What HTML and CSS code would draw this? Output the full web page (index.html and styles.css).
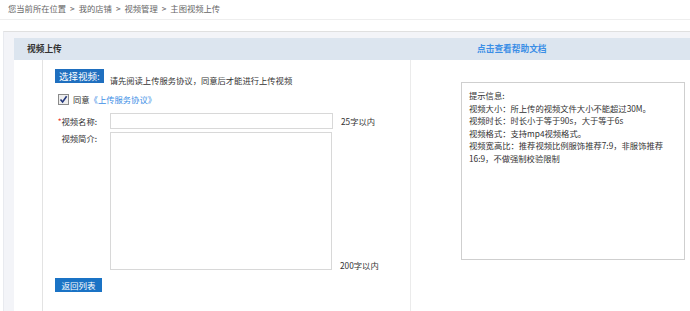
FILE: index.html
```html
<!DOCTYPE html>
<html>
  <head>
    <meta charset="utf-8">
    <title>主图视频上传</title>
    <link rel="stylesheet" href="styles.css">
  </head>
  <body>
    <div class="crumb">您当前所在位置<span class="sep">&gt;</span>我的店铺<span class="sep">&gt;</span>视频管理<span class="sep">&gt;</span>主图视频上传</div>
    <div class="panel">
      <div class="panel-head">
        <span class="panel-title">视频上传</span>
        <a class="help-link" href="#">点击查看帮助文档</a>
      </div>
      <div class="panel-body">
        <div class="gutter"></div>
        <div class="form-col">
          <div class="pick-row">
            <span class="pick-btn">选择视频:</span>
            <span class="pick-note">请先阅读上传服务协议，同意后才能进行上传视频</span>
          </div>
          <div class="agree-row">
            <span class="check">
              <svg width="9" height="9" viewBox="0 0 9 9"><path d="M1.5 4.5 L3.6 7 L7.6 1.2" fill="none" stroke="#22357a" stroke-width="1.6"/></svg>
            </span>
            <span>同意</span>
            <a class="agree-link" href="#">《上传服务协议》</a>
          </div>
          <div class="field">
            <label class="field-label"><i class="req">*</i>视频名称:</label>
            <input class="text-input" type="text">
            <span class="hint">25字以内</span>
          </div>
          <div class="field field-area">
            <label class="field-label">视频简介:</label>
            <textarea class="text-area"></textarea>
            <span class="hint">200字以内</span>
          </div>
          <button class="back-btn">返回列表</button>
        </div>
        <div class="tips-col">
          <div class="tips">
            提示信息:<br>
            视频大小：所上传的视频文件大小不能超过30M。<br>
            视频时长：时长小于等于90s，大于等于6s<br>
            视频格式：支持mp4视频格式。<br>
            视频宽高比：推荐视频比例服饰推荐7:9，非服饰推荐<br>
            16:9，不做强制校验限制
          </div>
        </div>
      </div>
    </div>
  </body>
</html>
```

FILE: styles.css
```css
body {
  margin: 0;
  font-family: "Noto Sans CJK SC", sans-serif;
  font-size: 8.3px;
  color: #333;
  background: #fff;
}

a {
  text-decoration: none;
}

.crumb {
  height: 19px;
  line-height: 16px;
  padding-left: 8px;
  color: #666;
  border-bottom: 1px solid #eee;
}

.crumb .sep {
  margin: 0 4px;
}

.panel {
  margin: 11px 0 0 3px;
  padding: 6px 0 0 10px;
  border-top: 1px solid #e0e0e0;
  border-left: 1px solid #e8eaef;
  background: #f3f4f8;
}

.panel-head {
  display: flex;
  height: 22px;
  line-height: 22px;
  padding-left: 13px;
  background: #dce5ef;
  font-weight: bold;
  font-size: 8.7px;
}

.panel-title {
  width: 450px;
  color: #333;
}

.help-link {
  color: #3a8ee6;
}

.panel-body {
  display: grid;
  grid-template-columns: 28px 368px 1fr;
  min-height: 260px;
  background: #fff;
}

.form-col {
  padding: 8px 0 0 12px;
  border-left: 1px solid #e3e3e3;
}

.pick-row {
  display: flex;
  align-items: flex-end;
}

.pick-btn {
  height: 14px;
  line-height: 14px;
  padding: 0 4px;
  margin-top: 1px;
  background: #1f6fbf;
  color: #fff;
  font-size: 9.5px;
}

.pick-note {
  margin: 0 0 -2px 6px;
  line-height: 10px;
}

.agree-row {
  display: flex;
  align-items: center;
  height: 14px;
  margin-top: 9px;
  padding-left: 3px;
}

.check {
  display: flex;
  align-items: center;
  justify-content: center;
  width: 9px;
  height: 9px;
  margin-right: 4px;
  border: 1px solid #8a8a8a;
  background: #eeeeee;
}

.agree-link {
  color: #3a8ee6;
}

.field {
  display: flex;
  align-items: center;
  margin-top: 7px;
}

.field-label {
  width: 42px;
  margin-right: 13px;
  text-align: right;
  line-height: 10px;
}

.req {
  font-style: normal;
  color: #e33;
}

.text-input {
  box-sizing: border-box;
  width: 223px;
  height: 16px;
  margin: 0;
  border: 1px solid #d8d8d8;
}

.hint {
  margin-left: 8px;
  line-height: 10px;
}

.field-area {
  align-items: flex-start;
  margin-top: 3px;
}

.field-area .field-label {
  margin-top: 1px;
}

.field-area .hint {
  align-self: flex-end;
  margin-bottom: 0;
}

.text-area {
  box-sizing: border-box;
  width: 222px;
  height: 138px;
  margin: 0;
  border: 1px solid #d8d8d8;
  resize: none;
}

.back-btn {
  display: block;
  width: 47px;
  height: 14px;
  margin-top: 8px;
  padding: 0;
  border: 0;
  background: #1a73c5;
  color: #fff;
  font-family: inherit;
  font-size: 8.5px;
}

.tips-col {
  padding: 22px 0 0 50px;
  border-left: 1px solid #ebebeb;
}

.tips {
  box-sizing: border-box;
  width: 224px;
  height: 178px;
  padding: 6px 7px;
  border: 1px solid #cfcfcf;
  line-height: 12.6px;
  color: #333;
}
```
